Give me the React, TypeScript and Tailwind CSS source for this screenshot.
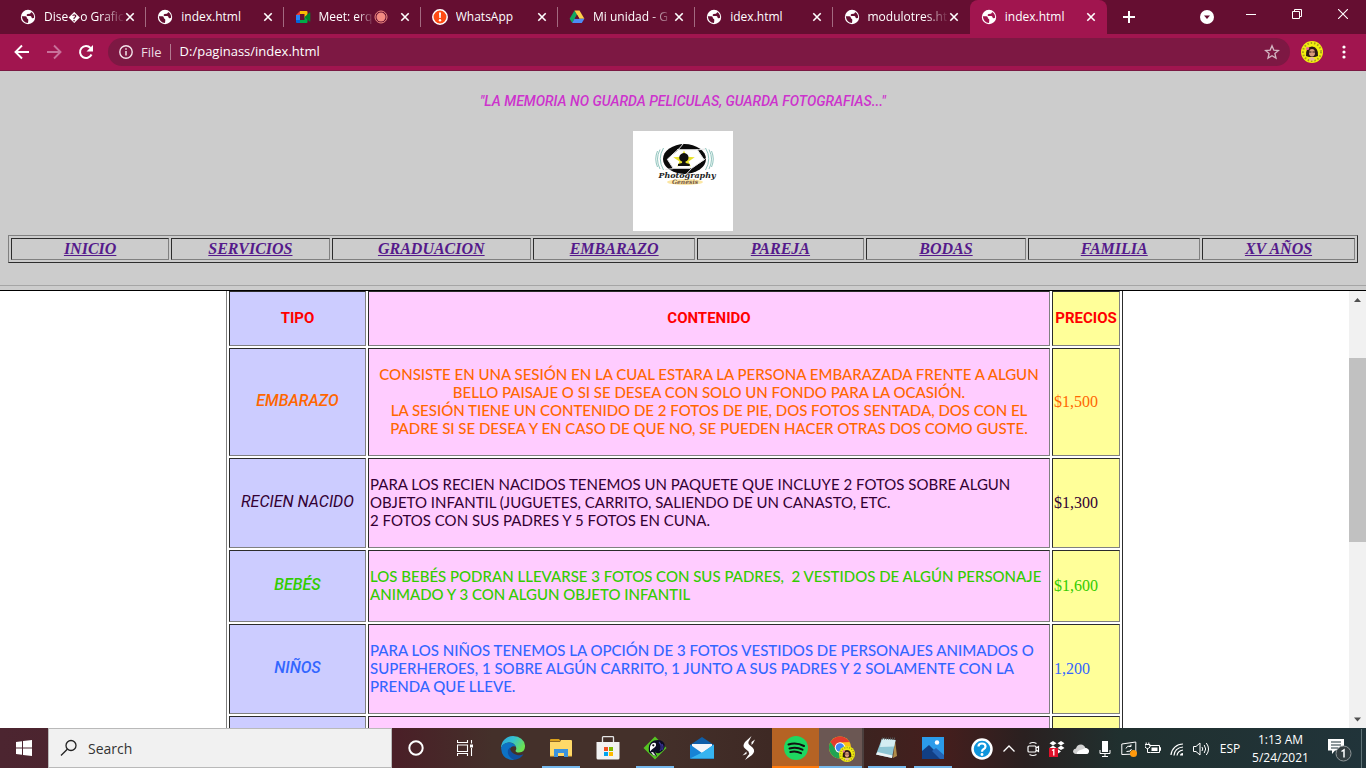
import type { ReactNode } from "react";

type TabKind = "globe" | "meet" | "alert" | "drive";

const tabs: { title: string; kind: TabKind; recording?: boolean; active?: boolean; fade?: boolean }[] = [
  { title: "Dise\uFFFDo Grafic", kind: "globe", fade: true },
  { title: "index.html", kind: "globe" },
  { title: "Meet: erq", kind: "meet", recording: true, fade: true },
  { title: "WhatsApp", kind: "alert" },
  { title: "Mi unidad - G", kind: "drive", fade: true },
  { title: "idex.html", kind: "globe" },
  { title: "modulotres.ht", kind: "globe", fade: true },
  { title: "index.html", kind: "globe", active: true },
];

function TabIcon({ kind, active }: { kind: TabKind; active?: boolean }) {
  if (kind === "meet")
    return (
      <svg viewBox="0 0 16 16" className="size-4 shrink-0" aria-hidden="true">
        <path d="M1 6l4-4v4z" fill="#ea4335" />
        <path d="M5 2h6.500q1 0 1 1v3.500L9.500 9V5H5z" fill="#fbbc04" />
        <path d="M1 6h4v5H1z" fill="#2684fc" />
        <path d="M1 11h4v3H2q-1 0-1-1z" fill="#0066da" />
        <path d="M5 11h4.500V8l3 2v3q0 1-1 1H5z" fill="#00ac47" />
        <path d="M9.500 8l5-4.500q.8-.5.8.5v8q0 1-.8.500z" fill="#00832d" />
      </svg>
    );
  if (kind === "alert")
    return (
      <svg viewBox="0 0 16 16" className="size-4 shrink-0" aria-hidden="true">
        <circle cx="8" cy="8" r="7.200" fill="#ff4b12" stroke="#fff" strokeWidth="1.500" />
        <path d="M7 3.500h2L8.700 9H7.300z" fill="#fff" />
        <circle cx="8" cy="11.300" r="1.200" fill="#fff" />
      </svg>
    );
  if (kind === "drive")
    return (
      <svg viewBox="0 0 16 16" className="size-4 shrink-0" aria-hidden="true">
        <path d="M5.500 1.500L8 5.800 3.300 14 .6 9.800z" fill="#11a861" />
        <path d="M5.500 1.500h5l4.900 8.300h-5z" fill="#ffcf48" />
        <path d="M5.500 9.800h9.900L12.800 14H3.200z" fill="#4d8bf5" />
        <path d="M8 5.800L10.400 9.800H5.600z" fill="#650e31" />
      </svg>
    );
  return (
    <svg viewBox="0 0 16 16" className="size-4 shrink-0" aria-hidden="true">
      <circle cx="8" cy="8" r="7.200" fill="#fff" />
      <path
        d="M1.800 7.200h3.400q1.300 0 1.600 1.300l.2 1q1.500.3 1.300 1.800l-.3 2.700q-5.500-.3-6.200-6.800zM11 3q.2 1.400-1.200 1.700l-2.300.2q-1.200.5-.8 1.600.4.600 1.600.6h1.800q1.200.1 1.400 1.200t1.400.9l1.200-.4q.4-3.800-3.100-5.800z"
        fill={active ? "#a1154f" : "#650e31"}
      />
    </svg>
  );
}

function Cross() {
  return (
    <svg viewBox="0 0 10 10" className="size-2.5" aria-hidden="true">
      <path d="M1.300 1.300l7.400 7.400M8.700 1.300L1.300 8.700" stroke="#fff" strokeWidth="1.600" />
    </svg>
  );
}

function Portrait({ className }: { className: string }) {
  return (
    <svg viewBox="0 0 22 22" className={className} aria-hidden="true">
      <circle cx="11" cy="11" r="11" fill="#f2ee10" />
      <circle cx="11" cy="11" r="9" fill="none" stroke="#a8a216" strokeWidth="2" strokeDasharray="1.500 1.900" />
      <path d="M5 15q-.5-9 6-9.500 6.500.500 6 9.500l-3 1H8z" fill="#2b1714" />
      <ellipse cx="11" cy="11.800" rx="3" ry="3.800" fill="#d99a7c" />
      <path d="M8 18q3-4 6 0l-1 1.500H9z" fill="#e7b79d" />
      <path d="M8 11h2.500M11.500 11H14" stroke="#3a1d18" />
      <circle cx="6.500" cy="7.500" r="1.600" fill="#e86a9a" />
    </svg>
  );
}

function Browser() {
  return (
    <header className="shrink-0 font-['Open_Sans','Noto_Sans',sans-serif] text-white">
      <div className="flex h-[34px] bg-[#650e31]">
        <div className="flex w-[1098px] min-w-0 shrink ml-[9px]" role="tablist">
          {tabs.map((t, i) => (
            <div
              key={i}
              role="tab"
              aria-selected={!!t.active}
              className={
                t.active
                  ? "flex min-w-0 flex-1 items-center rounded-t-lg bg-[#a1154f] pl-[11px]"
                  : "flex min-w-0 flex-1 items-center pl-[11px]"
              }
            >
              <TabIcon kind={t.kind} active={t.active} />
              <span
                className={
                  t.fade
                    ? "ml-2 min-w-0 flex-1 overflow-hidden whitespace-nowrap text-[12px] leading-5 [mask-image:linear-gradient(to_right,#000_70%,transparent)]"
                    : "ml-2 min-w-0 flex-1 overflow-hidden whitespace-nowrap text-[12px] leading-5"
                }
              >
                {t.title}
              </span>
              {t.recording && (
                <svg viewBox="0 0 14 14" className="mr-3 size-3.5 shrink-0" aria-label="Grabando">
                  <circle cx="7" cy="7" r="6" fill="none" stroke="#f28b82" />
                  <circle cx="7" cy="7" r="4.500" fill="#f28b82" />
                </svg>
              )}
              <button aria-label="Cerrar pestaña" className="mr-[10px] shrink-0">
                <Cross />
              </button>
              <span className={t.active || i === 6 ? "h-5 w-px" : "h-5 w-px bg-[#a36a80]"} />
            </div>
          ))}
        </div>
        <button aria-label="Nueva pestaña" className="grid w-11 shrink-0 place-items-center">
          <svg viewBox="0 0 12 12" className="size-3">
            <path d="M6 0v12M0 6h12" stroke="#fff" strokeWidth="2" />
          </svg>
        </button>
        <div className="ml-auto flex shrink-0">
          <button aria-label="Buscar pestañas" className="grid w-[42px] place-items-center">
            <svg viewBox="0 0 14 14" className="size-3.5">
              <circle cx="7" cy="7" r="7" fill="#fff" />
              <path d="M4 5.500h6L7 9z" fill="#650e31" />
            </svg>
          </button>
          <button aria-label="Minimizar" className="grid h-7 w-[46px] place-items-center">
            <svg viewBox="0 0 10 10" className="size-2.5">
              <path d="M0 5.500h10" stroke="#fff" />
            </svg>
          </button>
          <button aria-label="Restaurar" className="grid h-7 w-[46px] place-items-center">
            <svg viewBox="0 0 10 10" className="size-2.5">
              <path d="M.5 2.500h7v7h-7zM2.500 2.500v-2h7v7h-2" fill="none" stroke="#fff" />
            </svg>
          </button>
          <button aria-label="Cerrar" className="grid h-7 w-[46px] place-items-center">
            <svg viewBox="0 0 10 10" className="size-2.5">
              <path d="M0 0l10 10M10 0L0 10" stroke="#fff" strokeWidth="1.100" />
            </svg>
          </button>
        </div>
      </div>
      <div className="flex h-[37px] items-center border-b border-[#7b1842] bg-[#a1154f]">
        <button aria-label="Atrás" className="ml-[6px] grid w-8 place-items-center">
          <svg viewBox="0 0 16 16" className="size-4">
            <path d="M15 8H2M8 1.500L1.500 8 8 14.500" fill="none" stroke="#fff" strokeWidth="1.900" />
          </svg>
        </button>
        <button aria-label="Adelante" className="grid w-8 place-items-center">
          <svg viewBox="0 0 16 16" className="size-4">
            <path d="M1 8h13M8 1.500L14.500 8 8 14.500" fill="none" stroke="#c8719a" strokeWidth="1.900" />
          </svg>
        </button>
        <button aria-label="Recargar" className="grid w-8 place-items-center">
          <svg viewBox="0 0 16 16" className="size-4">
            <path d="M13.500 10.500A6 6 0 1 1 12.500 4" fill="none" stroke="#fff" strokeWidth="2" />
            <path d="M15 1v6.500H8.500z" fill="#fff" />
          </svg>
        </button>
        <form className="ml-[6px] flex h-7 min-w-0 flex-1 items-center rounded-full bg-[#7d1843] pl-[11px] pr-[10px]">
          <svg viewBox="0 0 14 14" className="size-3.5 shrink-0">
            <circle cx="7" cy="7" r="6.200" fill="none" stroke="#f3e4ea" strokeWidth="1.400" />
            <path d="M7 6v4.500M7 3.300v1.500" stroke="#f3e4ea" strokeWidth="1.500" />
          </svg>
          <label htmlFor="url" className="ml-2 border-r border-[#b27a90] pr-2 text-[13px] leading-4 text-[#ecdbe2]">
            File
          </label>
          <input id="url" defaultValue="D:/paginass/index.html" className="ml-[9px] min-w-0 flex-1 bg-transparent text-[13px] outline-none" />
          <button type="button" aria-label="Favorito" className="shrink-0">
            <svg viewBox="0 0 16 16" className="size-4">
              <path d="M8 1.800l1.800 4.300 4.700.4-3.600 3 1.100 4.600L8 11.700l-4 2.400 1.100-4.600-3.600-3 4.700-.4z" fill="none" stroke="#d3b6c2" strokeWidth="1.300" />
            </svg>
          </button>
        </form>
        <button aria-label="Perfil" className="ml-[11px]">
          <Portrait className="size-[22px]" />
        </button>
        <button aria-label="Menú" className="mr-[15px] ml-[14px]">
          <svg viewBox="0 0 14 14" className="size-3.5">
            <circle cx="7" cy="2" r="1.600" fill="#fff" />
            <circle cx="7" cy="7" r="1.600" fill="#fff" />
            <circle cx="7" cy="12" r="1.600" fill="#fff" />
          </svg>
        </button>
      </div>
    </header>
  );
}

function Logo() {
  return (
    <svg viewBox="0 0 100 100" className="size-[100px] bg-white" role="img" aria-label="Photography Genesis">
      <ellipse cx="51.500" cy="28" rx="21.500" ry="15" fill="#0a0a0a" />
      <path d="M45.300 18.700h19l7 10.300-12.600 8.300H40.300l-6-9z" fill="#fff" />
      <path d="M45.300 18.700l5-6M64.300 18.700H44M71.300 29l-7.500-11M58.700 37.300l14-9.800M58.700 37.300L53 43.500M40.300 37.300h17M34.300 28.300l6 9.300-8 1M34.300 28.300L45.500 18M64 19l8-1" stroke="#e6e6e6" strokeWidth="1" fill="none" />
      <path d="M51 19.500l2.800 6.300 8 .4-6.300 4.200 2.300 5.200-6.800-2.600-6.800 2.600 2.300-5.200-6.300-4.200 8-.4z" fill="#e8e22a" />
      <path d="M51 22q4.500.5 4.500 4.500 0 3-3 4l.2 1.500 4 1v2H45v-2l4-1 .2-1.500q-3-1-3-4Q46.500 22.500 51 22z" fill="#111" />
      <path d="M30.500 17q-6.500 10.500 0 22M27 18.500q-5 9.500 0 19.500M24.500 20q-3.500 8 0 16M72.500 17q6.500 10.500 0 22M76 18.500q5 9.500 0 19.500M78.500 20q3.500 8 0 16" fill="none" stroke="#8fc4bd" strokeWidth="1" />
      <ellipse cx="52" cy="51" rx="18" ry="3" fill="#fbe6a4" />
      <text x="54" y="47" textAnchor="middle" fontSize="8" fontWeight="700" fontStyle="italic" fontFamily="DejaVu Serif, serif" fill="#222">
        Photography
      </text>
      <text x="52" y="53" textAnchor="middle" fontSize="6" fontWeight="700" fontStyle="italic" fontFamily="DejaVu Serif, serif" fill="#775a46">
        Genesis
      </text>
    </svg>
  );
}

const cellBorder = "border border-t-[#2c2c2c] border-l-[#2c2c2c] border-b-[#808080] border-r-[#808080]";
const tableBorder = "border border-t-[#808080] border-l-[#808080] border-b-[#2c2c2c] border-r-[#2c2c2c]";

const navLinks = ["INICIO", "SERVICIOS", "GRADUACION", "EMBARAZO", "PAREJA", "BODAS", "FAMILIA", "XV AÑOS"];

function SiteHeader() {
  return (
    <div className="flex shrink-0 flex-col items-center border-b border-black bg-[#ccc] px-2 pt-5">
      <h1 className="font-['Roboto',sans-serif] text-[14px] leading-5 font-medium text-[#cc33cc] italic">
        "LA MEMORIA NO GUARDA PELICULAS, GUARDA FOTOGRAFIAS..."
      </h1>
      <div className="mt-5">
        <Logo />
      </div>
      <nav className="mt-1 w-full">
        <table className={`w-full table-fixed border-separate border-spacing-[2px] ${tableBorder}`}>
          <colgroup>
            <col className="w-[11.900%]" />
            <col className="w-[11.900%]" />
            <col className="w-[15%]" />
            <col className="w-[12.200%]" />
            <col className="w-[12.500%]" />
            <col className="w-[12.100%]" />
            <col className="w-[12.900%]" />
            <col className="w-[11.500%]" />
          </colgroup>
          <tbody>
            <tr>
              {navLinks.map((l) => (
                <td key={l} className={`p-px text-center font-['Liberation_Serif',serif] text-[16px] leading-[18px] font-bold italic ${cellBorder}`}>
                  <a href="#" className="text-[#551a8b] underline">
                    {l}
                  </a>
                </td>
              ))}
            </tr>
          </tbody>
        </table>
      </nav>
      <div className="-mx-2 mt-[22px] h-[5px] self-stretch border-t border-[#a5a5a5]" />
    </div>
  );
}

const rows: { type: string; lines: string[]; price: string; color: string; weight: string; center?: boolean }[] = [
  {
    type: "EMBARAZO",
    lines: [
      "CONSISTE EN UNA SESIÓN EN LA CUAL ESTARA LA PERSONA EMBARAZADA FRENTE A ALGUN",
      "BELLO PAISAJE O SI SE DESEA CON SOLO UN FONDO PARA LA OCASIÓN.",
      "LA SESIÓN TIENE UN CONTENIDO DE 2 FOTOS DE PIE, DOS FOTOS SENTADA, DOS CON EL",
      "PADRE SI SE DESEA Y EN CASO DE QUE NO, SE PUEDEN HACER OTRAS DOS COMO GUSTE.",
    ],
    price: "$1,500",
    color: "text-[#ff6600]",
    weight: "font-medium",
    center: true,
  },
  {
    type: "RECIEN NACIDO",
    lines: [
      "PARA LOS RECIEN NACIDOS TENEMOS UN PAQUETE QUE INCLUYE 2 FOTOS SOBRE ALGUN",
      "OBJETO INFANTIL (JUGUETES, CARRITO, SALIENDO DE UN CANASTO, ETC.",
      "2 FOTOS CON SUS PADRES Y 5 FOTOS EN CUNA.",
    ],
    price: "$1,300",
    color: "text-[#330033]",
    weight: "font-normal",
  },
  {
    type: "BEBÉS",
    lines: [
      "LOS BEBÉS PODRAN LLEVARSE 3 FOTOS CON SUS PADRES,  2 VESTIDOS DE ALGÚN PERSONAJE",
      "ANIMADO Y 3 CON ALGUN OBJETO INFANTIL",
    ],
    price: "$1,600",
    color: "text-[#33cc00]",
    weight: "font-medium",
  },
  {
    type: "NIÑOS",
    lines: [
      "PARA LOS NIÑOS TENEMOS LA OPCIÓN DE 3 FOTOS VESTIDOS DE PERSONAJES ANIMADOS O",
      "SUPERHEROES, 1 SOBRE ALGÚN CARRITO, 1 JUNTO A SUS PADRES Y 2 SOLAMENTE CON LA",
      "PRENDA QUE LLEVE.",
    ],
    price: "1,200",
    color: "text-[#3366ff]",
    weight: "font-medium",
  },
];

function PriceTable() {
  const head = `h-[55px] p-px font-['Roboto',sans-serif] text-[15px] font-bold text-[#ff0000] ${cellBorder}`;
  return (
    <table className={`mx-auto -mt-[3px] w-[897px] table-fixed border-separate border-spacing-[2px] ${tableBorder}`}>
      <colgroup>
        <col className="w-[137px]" />
        <col />
        <col className="w-[68px]" />
      </colgroup>
      <thead>
        <tr>
          <th className={`bg-[#ccccff] ${head}`}>TIPO</th>
          <th className={`bg-[#ffccff] ${head}`}>CONTENIDO</th>
          <th className={`bg-[#ffff99] ${head}`}>PRECIOS</th>
        </tr>
      </thead>
      <tbody>
        {rows.map((r) => (
          <tr key={r.type} className={r.color}>
            <td className={`bg-[#ccccff] p-px pb-1 text-center font-['Roboto',sans-serif] text-[16px] italic ${r.weight} ${cellBorder}`}>{r.type}</td>
            <td className={`bg-[#ffccff] px-px pt-4 pb-[18px] ${cellBorder}`}>
              <p className={`font-['Lato',sans-serif] text-[15px] leading-[18px] whitespace-pre ${r.weight} ${r.center ? "text-center" : ""}`}>
                {r.lines.join("\n")}
              </p>
            </td>
            <td className={`bg-[#ffff99] p-px font-['Liberation_Serif',serif] text-[16px] ${cellBorder}`}>{r.price}</td>
          </tr>
        ))}
        <tr>
          <td className={`h-[72px] bg-[#ccccff] ${cellBorder}`} />
          <td className={`bg-[#ffccff] ${cellBorder}`} />
          <td className={`bg-[#ffff99] ${cellBorder}`} />
        </tr>
      </tbody>
    </table>
  );
}

function ScrollRail() {
  return (
    <div className="flex w-[17px] shrink-0 flex-col bg-[#f1f1f1]" aria-hidden="true">
      <svg viewBox="0 0 17 17" className="size-[17px]">
        <path d="M5 11h7L8.500 7z" fill="#505050" />
      </svg>
      <div className="grow-[50]" />
      <div className="grow-[184] bg-[#c1c1c1]" />
      <div className="grow-[169]" />
      <svg viewBox="0 0 17 17" className="size-[17px]">
        <path d="M5 6.500h7l-3.500 4z" fill="#505050" />
      </svg>
    </div>
  );
}

function TaskButton({ label, className, bar, children }: { label: string; className?: string; bar?: string; children: ReactNode }) {
  return (
    <button aria-label={label} className={`flex h-10 shrink-0 flex-col items-center ${className ?? "w-[47px]"}`}>
      <span className="grid flex-1 place-items-center pt-0.5">{children}</span>
      <span className={`h-0.5 ${bar ?? "w-0"}`} />
    </button>
  );
}

function TrayIcon({ label, children }: { label: string; children: ReactNode }) {
  return (
    <button aria-label={label} className="grid h-10 w-6 shrink-0 place-items-center">
      <svg viewBox="0 0 16 16" className="size-4" fill="none" stroke="#fff">
        {children}
      </svg>
    </button>
  );
}

function Taskbar() {
  const blue = "w-[38px] bg-[#76b9ed]";
  return (
    <footer className="flex h-10 shrink-0 bg-[linear-gradient(to_right,#4c2530_0%,#4a1f27_29%,#44302a_36%,#44302a_48%,#3a2420_62%,#451e1d_69%,#2a2020_75%,#20302f_82%,#21343a_100%)] font-['Open_Sans','Noto_Sans',sans-serif] text-white">
      <button aria-label="Inicio" className="grid w-12 shrink-0 place-items-center">
        <svg viewBox="0 0 16 16" className="size-4" fill="#fff">
          <path d="M0 2l6-.8v6.300H0zM7 1l9-1v7.500H7zM0 8.500h6v6.300L0 14zM7 8.500h9V16l-9-1.100z" />
        </svg>
      </button>
      <label className="flex w-[344px] min-w-0 items-center border border-[#b9b9b9] bg-[#f1f1f1] pl-[11px]">
        <svg viewBox="0 0 18 18" className="size-[18px] shrink-0" fill="none" stroke="#222" strokeWidth="1.300">
          <circle cx="11" cy="6.500" r="5" />
          <path d="M7.300 10.200L1 16.500" />
        </svg>
        <input placeholder="Search" aria-label="Search" className="ml-[10px] min-w-0 flex-1 bg-transparent text-[14px] outline-none placeholder:text-[#333]" />
      </label>
      <TaskButton label="Cortana" className="w-12">
        <svg viewBox="0 0 16 16" className="size-4">
          <circle cx="8" cy="8" r="6.700" fill="none" stroke="#fff" strokeWidth="2" />
        </svg>
      </TaskButton>
      <TaskButton label="Vista de tareas" className="w-[49px]">
        <svg viewBox="0 0 16 16" className="size-4" fill="none" stroke="#fff" strokeWidth="1.100">
          <path d="M.5 0v2.500h10V0M.5 5h10v6.500H.5zM.5 16v-2.500h10V16M14.500 0v3.500M14.500 8v8" />
          <path d="M13 4.500h3v3h-3z" fill="#fff" stroke="none" />
        </svg>
      </TaskButton>
      <TaskButton label="Edge" className="w-12">
        <svg viewBox="0 0 24 24" className="size-6">
          <defs>
            <linearGradient id="edgeTop" x1="0" y1="0" x2="1" y2=".5">
              <stop offset="0" stopColor="#2aa6dd" />
              <stop offset=".5" stopColor="#35c1d0" />
              <stop offset="1" stopColor="#6be252" />
            </linearGradient>
          </defs>
          <path d="M0 12A12 12 0 0 1 12 0q10.500.5 12 9.500.3 6.500-6 7-3.500 0-3.500-1.800 1.200-1.500.6-3.500Q13.500 6.500 8 6.500 2 7 0 12z" fill="url(#edgeTop)" />
          <path d="M0 12Q2 6.600 7.500 6.500q5.500 0 7.300 4-5-1.500-6.300 3.500-.5 7 6 8.500l-2.500 1.500Q1 24 0 12z" fill="#0d72c4" />
          <path d="M9 11.500q-3.500 3-1.500 7.500 2 4 6.500 4.800 5.500-.8 8.500-5.500-3 1.500-6.500.8Q9 17 9 11.500z" fill="#1050a0" />
        </svg>
      </TaskButton>
      <TaskButton label="Explorador de archivos" bar={blue}>
        <svg viewBox="0 0 22 20" className="h-5 w-[22px]">
          <path d="M0 2q0-1 1-1h8l2 2.500H0z" fill="#dba11c" />
          <path d="M0 4h10l1-2h10q1 0 1 1v15H0z" fill="#ffd968" />
          <path d="M4 11h14v8h-4v-4H8v4H4z" fill="#3b93dd" />
          <path d="M0 18h4M18 18h4" stroke="#f0b83c" />
        </svg>
      </TaskButton>
      <TaskButton label="Microsoft Store">
        <svg viewBox="0 0 24 24" className="size-6">
          <path d="M6.500 7V1.500q0-.8.8-.8h9.400q.8 0 .8.800V7" fill="none" stroke="#e5e5e5" strokeWidth="1.300" />
          <path d="M.5 6h23v16q0 1.500-1.500 1.500H2Q.5 23.500.5 22z" fill="#f2f2f2" />
          <path d="M8 11h4v4H8z" fill="#f25022" />
          <path d="M13 11h4v4h-4z" fill="#7fba00" />
          <path d="M8 16h4v4H8z" fill="#00a4ef" />
          <path d="M13 16h4v4h-4z" fill="#ffb900" />
        </svg>
      </TaskButton>
      <TaskButton label="Editor de loros" bar={blue}>
        <svg viewBox="0 0 24 24" className="size-6">
          <path d="M12 .5L23.500 12 12 23.500.5 12z" fill="#55c421" />
          <path d="M6 16q-1.500-9 5-11.500Q19 2.500 21.500 8q1.500 5.500-5 9-3.500 1-4.500-1.500l2 5q-5-1-8-4.500z" fill="#0c0b24" />
          <path d="M7 11q1.500-5 5.500-4 1.500 2.500-1 4.500-2.500 1.500-4.500 4z" fill="#fff" />
          <circle cx="10.300" cy="9.300" r="1.100" fill="#111" />
          <path d="M16 6q4 4 1 9M19 8q2 3 0 6" stroke="#37318d" fill="none" strokeWidth="1.200" />
          <path d="M8 16l2 3 3 1-3-4z" fill="#ddd" />
        </svg>
      </TaskButton>
      <TaskButton label="Correo">
        <svg viewBox="0 0 24 24" className="size-6">
          <path d="M0 9L12 1l12 8v13.500H0z" fill="#0f5ea8" />
          <path d="M2 8h20v9H2z" fill="#f3f6fa" />
          <path d="M0 8.500L12 17 24 8.500v14H0z" fill="#1683d5" />
          <path d="M24 8.500v14H0L13 16z" fill="#36b4f0" />
        </svg>
      </TaskButton>
      <TaskButton label="Editor de video">
        <svg viewBox="0 0 14 24" className="h-6 w-3.5" fill="#fff">
          <path d="M9.500 0L3 6q-3 4 0 6.500l3.500 3q1.500 2-.5 4L3 24l7-5q4-4 .5-7.500L7 8.500Q5.500 6.500 7.500 4z" />
          <path d="M13 3.500L9.500 6v3L11 7.500zM.5 19.500l4-4V18z" />
        </svg>
      </TaskButton>
      <TaskButton label="Spotify" className="w-[47px] bg-[#b56324]" bar="w-full bg-[#ff7a0c]">
        <svg viewBox="0 0 24 24" className="size-6">
          <circle cx="12" cy="12" r="12" fill="#1ed760" />
          <path d="M4.500 8.500q8-2.500 15.500 1.500M5.500 12.500q7-2 13 1.200M6.300 16q5.500-1.500 10.700 1.200" fill="none" stroke="#111" strokeWidth="2" strokeLinecap="round" />
        </svg>
      </TaskButton>
      <TaskButton label="Chrome" className="w-[45px] border-r-2 border-[#4c403e] bg-[#6b5753]" bar="w-full bg-[#76b9ed]">
        <span className="relative block size-6">
          <svg viewBox="0 0 24 24" className="size-6">
            <circle cx="11" cy="11.500" r="11" fill="#fbc116" />
            <path d="M1.500 6A11 11 0 0 1 20.500 6L11 6.500l-5 8z" fill="#e33b2e" />
            <path d="M1.500 6A11 11 0 0 0 10 22.500l4.500-8L7 14z" fill="#21a353" />
            <circle cx="11" cy="11.500" r="5.200" fill="#fff" />
            <circle cx="11" cy="11.500" r="4.200" fill="#4285f4" />
          </svg>
          <Portrait className="absolute top-2.5 left-2.5 size-4" />
        </span>
      </TaskButton>
      <TaskButton label="Bloc de notas" className="w-[46px]" bar={blue}>
        <svg viewBox="0 0 24 24" className="size-6">
          <path d="M20 4l2 16-4 2z" fill="#b08c4a" />
          <path d="M7 2.500L20.500 4 17 22 1 18.500z" fill="#8ec6d4" />
          <path d="M7 2.500L20.500 4l-1.300 6.500L5 11z" fill="#d4edf2" />
          <path d="M1 18.500L17 22l.5-2.500L2.500 16z" fill="#eef4f5" />
          <path d="M7 2.500h13.500" stroke="#555" strokeDasharray="1 1" strokeWidth="2" />
        </svg>
      </TaskButton>
      <TaskButton label="Fotos" className="w-[46px]" bar={blue}>
        <svg viewBox="0 0 22 22" className="size-[22px]">
          <path d="M0 0h22v22H0z" fill="#2b9bea" />
          <path d="M0 14l7-6 14 14H0z" fill="#123f84" />
          <path d="M10 14l4-3 8 7v4h-4z" fill="#2463b4" />
          <circle cx="15" cy="5.500" r="2.200" fill="#fff" />
        </svg>
      </TaskButton>
      <div className="ml-auto flex shrink-0 pt-px">
        <button aria-label="Ayuda" className="grid w-[30px] place-items-center">
          <svg viewBox="0 0 22 22" className="size-[22px]">
            <circle cx="11" cy="11" r="9.500" fill="#0f95dc" stroke="#fff" strokeWidth="2.500" />
            <path d="M7.500 8.500q0-3 3.500-3t3.500 3q0 1.500-2 2.700-1.500 1-1.500 2.600" fill="none" stroke="#fff" strokeWidth="2.200" />
            <circle cx="11" cy="16.500" r="1.400" fill="#fff" />
          </svg>
        </button>
        <TrayIcon label="Mostrar iconos ocultos">
          <path d="M2.500 10.500L8 5l5.500 5.500" strokeWidth="1.300" />
        </TrayIcon>
        <TrayIcon label="Reunirse ahora">
          <path d="M4 5h6q1 0 1 1v4q0 1-1 1H4q-1 0-1-1V6q0-1 1-1zM11 7l2.500-1.500v5L11 9M4.500 2.500q3.500-2 7 0M4.500 13.500q3.500 2 7 0" strokeWidth="1.200" />
        </TrayIcon>
        <TrayIcon label="Dropbox">
          <path d="M4 0l3.500 2.300L4 4.500.5 2.300zM12 0l3.500 2.300L12 4.500 8.500 2.300zM4 4.500L7.500 7 4 9 .5 7zM12 4.500L15.500 7 12 9 8.500 7zM8 7.500l4 3-3 2z" fill="#fff" stroke="none" />
          <path d="M0 7h9v9H0z" fill="#e0102a" stroke="none" />
          <path d="M3 9.500l1.800-1V14.500" strokeWidth="1.300" />
        </TrayIcon>
        <TrayIcon label="OneDrive">
          <path d="M3 13q-3-.5-3-3 .5-2.500 3-2.500Q4 3.500 8 3.500q3 0 4.500 3.500 3.500.5 3.500 3.500-.5 2.500-3 2.500z" fill="#d2d2d2" stroke="none" />
          <path d="M4 13q-1-3 5-4.500L12.500 7q3.500.5 3.500 3.500-.5 2.500-3 2.500z" fill="#fff" stroke="none" />
        </TrayIcon>
        <TrayIcon label="Micrófono">
          <path d="M5 0h6v11H5z" fill="#fff" stroke="none" />
          <path d="M3 9v3.500h10V9M8 13v3M5 15.500h6" />
        </TrayIcon>
        <TrayIcon label="Actualizaciones">
          <path d="M.8 3l14-2v12l-14 .5zM5 7.500q.5-3 5-2.500M10 3.500v2H8M10.500 8q-.5 3-5 2.500" />
          <circle cx="12.500" cy="12.500" r="3.500" fill="#ff9a0c" stroke="none" />
        </TrayIcon>
        <TrayIcon label="Batería">
          <path d="M4.500 4.500h10v7h-9M14.500 6.500h1v3h-1M0 3.500h5v2.500q-1 1.500-2.500 1.500T0 6zM1.200 3.500v-2M3.800 3.500v-2M2.500 7.500v4h3" />
          <path d="M6.500 6.500h6v3.500h-6z" fill="#fff" stroke="none" />
        </TrayIcon>
        <TrayIcon label="Red">
          <path d="M2 14A12 12 0 0 1 14 3M5 14.500q.5-7.500 9-8.500M8 14.500q.5-4.500 6-5.500" strokeWidth="1.200" />
          <path d="M11 14.500q0-2.500 3-2.500v2.500z" fill="#fff" stroke="none" />
        </TrayIcon>
        <TrayIcon label="Volumen">
          <path d="M.5 5.500h2.500L7 2v12L3 10.500H.5zM9 6q1.500 2 0 4M11.200 4q3 4 0 8M13.300 2q4.500 6 0 12" />
        </TrayIcon>
        <button className="w-[34px] text-[12px]">ESP</button>
        <button className="w-[67px] text-center text-[12px] leading-[18px] whitespace-nowrap">
          1:13 AM
          <br />
          5/24/2021
        </button>
        <button aria-label="1 notificación" className="grid w-[46px] place-items-center pl-1">
          <svg viewBox="0 0 26 26" className="size-[26px]">
            <path d="M2 3h16v11.500H9L6 18v-3.500H2z" fill="#fff" />
            <path d="M5 6h10M5 9h10M5 12h7" stroke="#21343a" strokeWidth="1.200" />
            <circle cx="17.500" cy="17.500" r="7.500" fill="#333d40" stroke="#8d9597" />
            <path d="M15.500 15.500l2.500-1.700v7.700" fill="none" stroke="#fff" strokeWidth="1.500" />
          </svg>
        </button>
        <button aria-label="Mostrar escritorio" className="ml-px w-[5px] border-l border-[#5f7377]" />
      </div>
    </footer>
  );
}

export default function App() {
  return (
    <div className="flex h-screen flex-col overflow-hidden bg-white">
      <Browser />
      <SiteHeader />
      <main className="flex min-h-0 flex-1">
        <div className="min-w-0 flex-1 overflow-hidden">
          <PriceTable />
        </div>
        <ScrollRail />
      </main>
      <Taskbar />
    </div>
  );
}
